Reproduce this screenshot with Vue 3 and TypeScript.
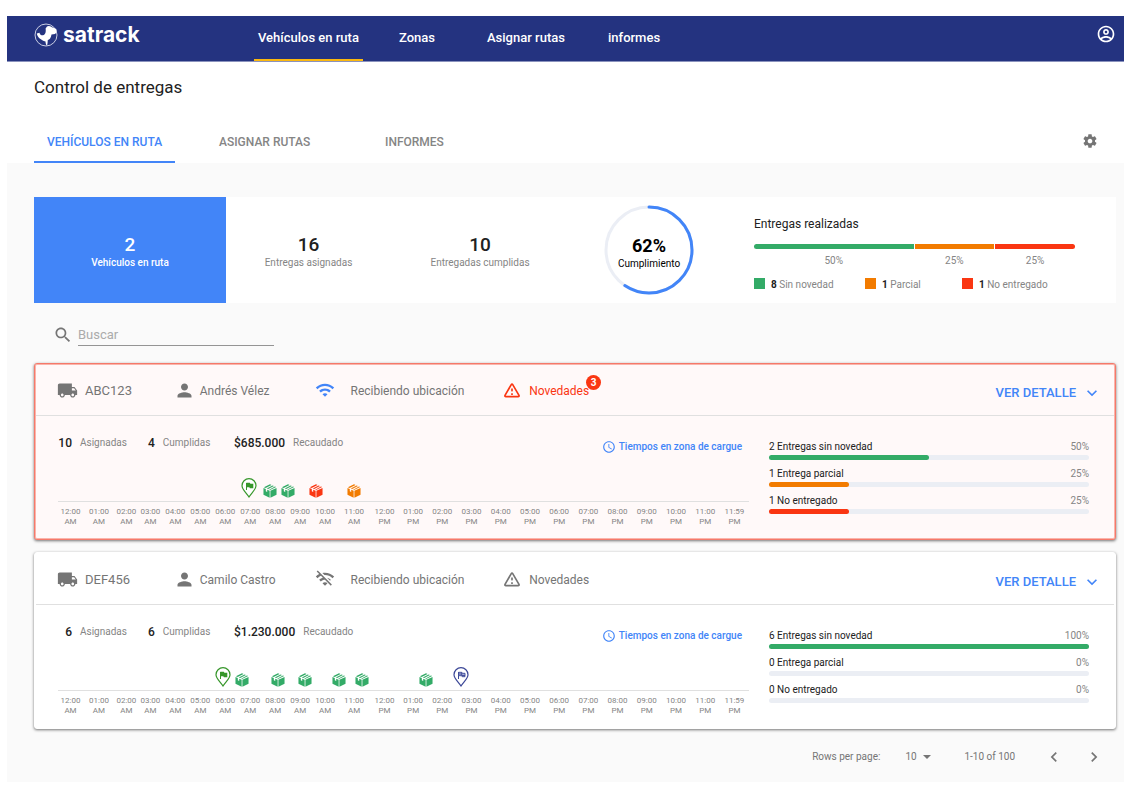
<script setup lang="ts">
import { ref } from 'vue'

type EventKind = 'start' | 'end' | 'ok' | 'partial' | 'failed'

interface TimelineEvent {
  kind: EventKind
  at: number
}

interface Progress {
  label: string
  percent: number
  tone: 'ok' | 'partial' | 'failed'
}

interface Vehicle {
  plate: string
  driver: string
  online: boolean
  alerts: number
  assigned: number
  completed: number
  collected: string
  events: TimelineEvent[]
  progress: Progress[]
}

const sections = ['Vehículos en ruta', 'Zonas', 'Asignar rutas', 'informes']
const tabs = ['VEHÍCULOS EN RUTA', 'ASIGNAR RUTAS', 'INFORMES']
const activeTab = ref(0)
const search = ref('')
const pageSize = ref('10')

const totals = [
  { value: 2, label: 'Vehículos en ruta' },
  { value: 16, label: 'Entregas asignadas' },
  { value: 10, label: 'Entregadas cumplidas' },
]

const results = [
  { count: 8, label: 'Sin novedad', percent: 50, tone: 'ok' },
  { count: 1, label: 'Parcial', percent: 25, tone: 'partial' },
  { count: 1, label: 'No entregado', percent: 25, tone: 'failed' },
]

const hours = [
  '12:00 AM', '01:00 AM', '02:00 AM', '03:00 AM', '04:00 AM', '05:00 AM', '06:00 AM',
  '07:00 AM', '08:00 AM', '09:00 AM', '10:00 AM', '11:00 AM', '12:00 PM', '01:00 PM',
  '02:00 PM', '03:00 PM', '04:00 PM', '05:00 PM', '06:00 PM', '07:00 PM', '08:00 PM',
  '09:00 PM', '10:00 PM', '11:00 PM', '11:59 PM',
].map((h) => h.split(' '))

const vehicles: Vehicle[] = [
  {
    plate: 'ABC123',
    driver: 'Andrés Vélez',
    online: true,
    alerts: 3,
    assigned: 10,
    completed: 4,
    collected: '$685.000',
    events: [
      { kind: 'start', at: 27.6 },
      { kind: 'ok', at: 30.7 },
      { kind: 'ok', at: 33.3 },
      { kind: 'failed', at: 37.4 },
      { kind: 'partial', at: 42.8 },
    ],
    progress: [
      { label: '2 Entregas sin novedad', percent: 50, tone: 'ok' },
      { label: '1 Entrega parcial', percent: 25, tone: 'partial' },
      { label: '1 No entregado', percent: 25, tone: 'failed' },
    ],
  },
  {
    plate: 'DEF456',
    driver: 'Camilo Castro',
    online: false,
    alerts: 0,
    assigned: 6,
    completed: 6,
    collected: '$1.230.000',
    events: [
      { kind: 'start', at: 23.9 },
      { kind: 'ok', at: 26.6 },
      { kind: 'ok', at: 31.8 },
      { kind: 'ok', at: 35.8 },
      { kind: 'ok', at: 40.7 },
      { kind: 'ok', at: 44 },
      { kind: 'ok', at: 53.3 },
      { kind: 'end', at: 58.3 },
    ],
    progress: [
      { label: '6 Entregas sin novedad', percent: 100, tone: 'ok' },
      { label: '0 Entrega parcial', percent: 0, tone: 'partial' },
      { label: '0 No entregado', percent: 0, tone: 'failed' },
    ],
  },
]
</script>

<template>
  <div class="page">
    <header class="topbar">
      <a class="brand" href="#">
        <svg width="24" height="24" viewBox="0 0 24 24" aria-hidden="true">
          <circle cx="12" cy="12" r="11" fill="none" stroke="#c9cde3" stroke-width="1" />
          <path fill="#fff" d="M13 3.500C14 2.500 16 2.800 18 4.200L22.300 6C22.800 8 22.300 10.500 21 11L17.500 11.500C17 15 15.500 16.500 13.800 17C13.600 19 13.600 21 13 22.600C12 22 11.600 20 11.500 18.500C7 17 3.500 14.500 2.800 10.500L5.500 9.800C6 11.800 7.500 12.600 9 12.300C11.800 11.500 12 8.500 11.600 5.500Z" />
        </svg>
        <span>satrack</span>
      </a>
      <nav class="sections">
        <a v-for="(s, i) in sections" :key="s" href="#" :class="{ active: i === 0 }">{{ s }}</a>
      </nav>
      <button class="icon-button account" type="button" aria-label="Cuenta">
        <svg width="20" height="20" viewBox="0 0 24 24" fill="currentColor">
          <path d="M12 2C6.480 2 2 6.480 2 12s4.480 10 10 10 10-4.480 10-10S17.520 2 12 2zM7.070 18.280c.43-.9 3.050-1.780 4.930-1.780s4.510.88 4.930 1.780C15.570 19.360 13.860 20 12 20s-3.570-.64-4.930-1.720zm11.290-1.450c-1.430-1.740-4.900-2.330-6.360-2.330s-4.930.59-6.360 2.330C4.620 15.490 4 13.820 4 12c0-4.410 3.590-8 8-8s8 3.590 8 8c0 1.820-.62 3.490-1.640 4.830zM12 6c-1.940 0-3.500 1.560-3.500 3.500S10.060 13 12 13s3.500-1.560 3.500-3.500S13.940 6 12 6zm0 5c-.83 0-1.500-.67-1.500-1.500S11.170 8 12 8s1.500.67 1.500 1.500S12.830 11 12 11z" />
        </svg>
      </button>
    </header>

    <h1>Control de entregas</h1>

    <div class="tabbar">
      <div class="tabs" role="tablist">
        <button
          v-for="(t, i) in tabs"
          :key="t"
          type="button"
          role="tab"
          :aria-selected="activeTab === i"
          :class="{ active: activeTab === i }"
          @click="activeTab = i"
        >{{ t }}</button>
      </div>
      <button class="icon-button gear" type="button" aria-label="Configuración">
        <svg width="16" height="16" viewBox="0 0 24 24" fill="currentColor">
          <path d="M19.430 12.980c.04-.32.07-.64.07-.98s-.03-.66-.07-.98l2.110-1.650c.19-.15.24-.42.12-.64l-2-3.460c-.12-.22-.39-.3-.61-.22l-2.490 1c-.52-.4-1.080-.73-1.690-.98l-.38-2.650C14.460 2.180 14.250 2 14 2h-4c-.25 0-.46.18-.49.42l-.38 2.650c-.61.25-1.170.59-1.690.98l-2.490-1c-.23-.09-.49 0-.61.22l-2 3.460c-.13.22-.07.49.12.64l2.110 1.650c-.04.32-.07.65-.07.98s.03.66.07.98l-2.110 1.650c-.19.15-.24.42-.12.64l2 3.460c.12.22.39.3.61.22l2.490-1c.52.4 1.080.73 1.690.98l.38 2.650c.03.24.24.42.49.42h4c.25 0 .46-.18.49-.42l.38-2.650c.61-.25 1.170-.59 1.690-.98l2.490 1c.23.09.49 0 .61-.22l2-3.460c.12-.22.07-.49-.12-.64l-2.110-1.650zM12 15.500c-1.930 0-3.500-1.570-3.500-3.500s1.570-3.500 3.500-3.500 3.500 1.570 3.500 3.500-1.570 3.500-3.500 3.500z" />
        </svg>
      </button>
    </div>

    <main class="panel">
      <section class="summary">
        <div v-for="(t, i) in totals" :key="t.label" class="total" :class="{ selected: i === 0 }">
          <strong>{{ t.value }}</strong>
          <span>{{ t.label }}</span>
        </div>
        <div class="compliance">
          <svg class="ring" width="90" height="90" viewBox="0 0 90 90" fill="none" stroke-width="3" aria-hidden="true">
            <circle cx="45" cy="45" r="43" stroke="#ebeef5" />
            <circle cx="45" cy="45" r="43" stroke="#4285f8" stroke-linecap="round" pathLength="100" stroke-dasharray="59.500 100" transform="rotate(-90 45 45)" />
          </svg>
          <div class="ring-text">
            <strong>62%</strong>
            <span>Cumplimiento</span>
          </div>
        </div>
        <div class="results">
          <h2>Entregas realizadas</h2>
          <div class="split">
            <div v-for="r in results" :key="r.label" class="part" :style="{ flexGrow: r.percent }">
              <div class="part-bar" :class="r.tone"></div>
              <span>{{ r.percent }}%</span>
            </div>
          </div>
          <ul class="legend">
            <li v-for="r in results" :key="r.label">
              <i :class="r.tone"></i>
              <span><b>{{ r.count }}</b> {{ r.label }}</span>
            </li>
          </ul>
        </div>
      </section>

      <div class="search">
        <label for="search" aria-label="Buscar">
          <svg width="20" height="20" viewBox="0 0 24 24" fill="currentColor">
            <path d="M15.500 14h-.79l-.28-.27C15.410 12.590 16 11.110 16 9.500 16 5.910 13.090 3 9.500 3S3 5.910 3 9.500 5.910 16 9.500 16c1.610 0 3.090-.59 4.230-1.570l.27.28v.79l5 4.990L20.490 19l-4.990-5zm-6 0C7.010 14 5 11.990 5 9.500S7.010 5 9.500 5 14 7.010 14 9.500 11.990 14 9.500 14z" />
          </svg>
        </label>
        <input id="search" v-model="search" type="text" placeholder="Buscar" />
      </div>

      <div class="cards">
        <article v-for="v in vehicles" :key="v.plate" class="card" :class="{ alert: v.alerts > 0 }">
          <header class="card-head">
            <div class="fact plate">
              <svg width="21" height="21" viewBox="0 0 24 24" fill="currentColor" aria-hidden="true">
                <path d="M20 8h-3V4H3c-1.100 0-2 .9-2 2v11h2c0 1.660 1.340 3 3 3s3-1.340 3-3h6c0 1.660 1.340 3 3 3s3-1.340 3-3h2v-5l-3-4zM6 18.500c-.83 0-1.500-.67-1.500-1.500s.67-1.500 1.500-1.500 1.500.67 1.500 1.500-.67 1.500-1.500 1.500zm13.500-9l1.960 2.500H17V9.500h2.500zm-1.500 9c-.83 0-1.500-.67-1.500-1.500s.67-1.500 1.500-1.500 1.500.67 1.500 1.500-.67 1.500-1.500 1.500z" />
              </svg>
              <span>{{ v.plate }}</span>
            </div>
            <div class="fact driver">
              <svg width="21" height="21" viewBox="0 0 24 24" fill="currentColor" aria-hidden="true">
                <path d="M12 12c2.210 0 4-1.790 4-4s-1.790-4-4-4-4 1.790-4 4 1.790 4 4 4zm0 2c-2.670 0-8 1.340-8 4v2h16v-2c0-2.660-5.330-4-8-4z" />
              </svg>
              <span>{{ v.driver }}</span>
            </div>
            <div class="fact signal">
              <svg width="20" height="20" viewBox="0 0 24 24" fill="currentColor" :class="{ online: v.online }" aria-hidden="true">
                <path v-if="v.online" d="M1 9l2 2c4.970-4.970 13.030-4.970 18 0l2-2C16.930 2.930 7.080 2.930 1 9zm8 8l3 3 3-3c-1.650-1.660-4.340-1.660-6 0zm-4-4l2 2c2.760-2.760 7.240-2.760 10 0l2-2C15.140 9.140 8.870 9.140 5 13z" />
                <path v-else d="M22.990 9C19.150 5.160 13.800 3.760 8.840 4.780l2.520 2.520c3.470-.17 6.990 1.050 9.630 3.700l2-2zm-4 4c-1.290-1.290-2.840-2.130-4.490-2.560l3.530 3.530.96-.97zM2 3.050L5.070 6.100C3.600 6.820 2.220 7.780 1 9l1.990 2c1.240-1.240 2.670-2.160 4.200-2.770l2.240 2.240C7.810 10.890 6.270 11.730 5 13v.01L6.990 15c1.360-1.360 3.140-2.040 4.920-2.060L18.980 20l1.270-1.260L3.290 1.790 2 3.050zM9 17l3 3 3-3c-1.650-1.660-4.340-1.660-6 0z" />
              </svg>
              <span>Recibiendo ubicación</span>
            </div>
            <div class="fact news">
              <svg width="20" height="20" viewBox="0 0 24 24" fill="currentColor" aria-hidden="true">
                <path d="M12 5.990L19.530 19H4.470L12 5.990M2.740 18c-.77 1.330.19 3 1.730 3h15.060c1.540 0 2.500-1.670 1.730-3L13.730 4.990c-.77-1.330-2.690-1.330-3.460 0L2.740 18zM11 11v2c0 .55.45 1 1 1s1-.45 1-1v-2c0-.55-.45-1-1-1s-1 .45-1 1zm0 5h2v2h-2z" />
              </svg>
              <span class="news-label">Novedades<b v-if="v.alerts" class="badge">{{ v.alerts }}</b></span>
            </div>
            <button class="detail" type="button">
              VER DETALLE
              <svg width="20" height="20" viewBox="0 0 24 24" fill="currentColor" aria-hidden="true">
                <path d="M16.590 8.590L12 13.170 7.410 8.590 6 10l6 6 6-6z" />
              </svg>
            </button>
          </header>

          <div class="card-body">
            <div class="route">
              <div class="route-head">
                <dl class="stats">
                  <div><dd>{{ v.assigned }}</dd><dt>Asignadas</dt></div>
                  <div><dd>{{ v.completed }}</dd><dt>Cumplidas</dt></div>
                  <div><dd>{{ v.collected }}</dd><dt>Recaudado</dt></div>
                </dl>
                <a class="times" href="#">
                  <svg width="14" height="14" viewBox="0 0 24 24" fill="currentColor" aria-hidden="true">
                    <path d="M11.990 2C6.470 2 2 6.480 2 12s4.470 10 9.990 10C17.520 22 22 17.520 22 12S17.520 2 11.990 2zM12 20c-4.420 0-8-3.580-8-8s3.580-8 8-8 8 3.580 8 8-3.580 8-8 8zm.5-13H11v6l5.250 3.150.75-1.230-4.500-2.670z" />
                  </svg>
                  Tiempos en zona de cargue
                </a>
              </div>
              <div class="track">
                <span
                  v-for="(e, i) in v.events"
                  :key="i"
                  class="event"
                  :class="e.kind"
                  :style="{ left: e.at + '%' }"
                >
                  <svg v-if="e.kind === 'start' || e.kind === 'end'" width="16" height="20" viewBox="0 0 16 20">
                    <path d="M8 19C5.500 15 1 11.500 1 7.700a7 7 0 0 1 14 0C15 11.500 10.500 15 8 19z" fill="#fff" stroke="currentColor" stroke-width="1.200" />
                    <path d="M5.500 12V5" stroke="currentColor" stroke-width="1" />
                    <path v-if="e.kind === 'start'" d="M5.300 4.800h3.500l.6 1h2.900v4.400H8.900l-.6-1H5.300z" fill="currentColor" />
                    <path v-else d="M5.500 5.300h3.200l.6 1h2.700v3.400H9.200l-.6-1H5.500zM8.700 5.300v3.400M5.500 7h3.200M9 8.500h3" fill="#aab0d8" stroke="currentColor" stroke-width=".9" />
                  </svg>
                  <svg v-else width="14" height="14" viewBox="0 0 24 24" fill="currentColor">
                    <path d="M12 .3l2.700 1.300L4.600 6.700 1.500 5.400zM16.500 2.400l2.300 1.100L8.900 8.500 6.500 7.500zM20.500 4.300l2 1L12 10.400l-1.400-.7z" />
                    <path d="M.8 6.700L4.800 8.600v3.800l2.400 1.100V9.700l4.200 2v12L.8 18.400zM23.200 6.700v11.700l-10.500 5.300v-12z" />
                  </svg>
                </span>
              </div>
              <ol class="hours">
                <li v-for="h in hours" :key="h.join()">{{ h[0] }}<br />{{ h[1] }}</li>
              </ol>
            </div>

            <div class="progress">
              <div v-for="p in v.progress" :key="p.label">
                <div class="progress-text"><span>{{ p.label }}</span><span class="muted">{{ p.percent }}%</span></div>
                <div class="meter"><div :class="p.tone" :style="{ width: p.percent + '%' }"></div></div>
              </div>
            </div>
          </div>
        </article>
      </div>

      <footer class="pager">
        <label for="page-size">Rows per page:</label>
        <div class="select">
          <select id="page-size" v-model="pageSize">
            <option>10</option>
            <option>25</option>
            <option>50</option>
          </select>
          <svg width="8" height="4" viewBox="0 0 8 4" aria-hidden="true"><path d="M0 0h8L4 4z" fill="currentColor" /></svg>
        </div>
        <span class="range">1-10 of 100</span>
        <button class="icon-button" type="button" aria-label="Anterior">
          <svg width="20" height="20" viewBox="0 0 24 24" fill="currentColor"><path d="M15.410 7.410L14 6l-6 6 6 6 1.410-1.410L10.830 12z" /></svg>
        </button>
        <button class="icon-button" type="button" aria-label="Siguiente">
          <svg width="20" height="20" viewBox="0 0 24 24" fill="currentColor"><path d="M10 6L8.590 7.410 13.170 12l-4.580 4.590L10 18l6-6z" /></svg>
        </button>
      </footer>
    </main>
  </div>
</template>

<style>
body {
  background: #fff;
}
</style>

<style scoped>
.page {
  margin: 16px 22px 7px 7px;
  font: 10px/14px Roboto, sans-serif;
  color: #212121;
}
.page * {
  box-sizing: border-box;
}
button,
input,
select {
  font: inherit;
  color: inherit;
  background: none;
  border: 0;
  padding: 0;
  margin: 0;
}
button {
  cursor: pointer;
}
a {
  color: inherit;
  text-decoration: none;
}
svg {
  display: block;
  flex: none;
}
h1,
h2,
ul,
ol,
dl,
dd,
dt {
  margin: 0;
  padding: 0;
  list-style: none;
  font-weight: 400;
}
.icon-button {
  display: block;
}

.topbar {
  display: grid;
  grid-template-columns: 220px 1fr auto;
  height: 46px;
  padding: 0 8px 0 27px;
  background: #243380;
  border-bottom: 1px solid #8a92bd;
  color: #fff;
}
.brand {
  display: flex;
  align-items: center;
  gap: 5px;
  padding-bottom: 8px;
  font: 700 21px/24px Inter, sans-serif;
}
.sections {
  display: grid;
  grid-template-columns: 141px 88px 121px auto;
  justify-content: start;
  justify-items: start;
}
.sections a {
  padding: 0 4px;
  font-size: 13px;
  font-weight: 500;
  line-height: 43px;
  border-bottom: 2px solid transparent;
}
.sections .active {
  border-bottom-color: #fbb80f;
}
.account {
  padding-bottom: 9px;
}

h1 {
  margin: 13px 27px 24px;
  font-size: 17px;
  line-height: 24px;
}
.tabbar {
  display: flex;
  justify-content: space-between;
  align-items: center;
  padding: 0 26px 0 27px;
}
.tabs {
  display: grid;
  grid-template-columns: 172px 166px auto;
  justify-items: start;
}
.tabs button {
  padding: 0 13px;
  font-size: 12px;
  line-height: 38px;
  font-weight: 500;
  color: #858585;
  border-bottom: 2px solid transparent;
}
.tabs .active {
  color: #4285f8;
  border-bottom-color: #4285f8;
}
.gear {
  padding-bottom: 4px;
  color: #757575;
}

.panel {
  padding: 34px 8px 15px 27px;
  background: #fafafa;
}
.summary {
  display: grid;
  grid-template-columns: 192fr 165fr 178fr 160fr 387fr;
  min-height: 106px;
  background: #fff;
}
.total {
  display: flex;
  flex-direction: column;
  align-items: center;
  justify-content: center;
  padding-top: 4px;
  color: #858585;
}
.total strong {
  font-size: 19px;
  line-height: 22px;
  font-weight: 500;
  color: #212121;
}
.total.selected,
.total.selected strong {
  color: #fff;
}
.total.selected {
  background: #4285f8;
  font-weight: 500;
}
.compliance {
  display: grid;
  place-items: center;
  color: #000;
}
.compliance > * {
  grid-area: 1 / 1;
}
.ring-text {
  display: flex;
  flex-direction: column;
  align-items: center;
  padding-top: 6px;
}
.ring-text strong {
  font-size: 18px;
  line-height: 22px;
  font-weight: 700;
}
.results {
  padding: 19px 41px 11px 25px;
}
h2 {
  font-size: 12px;
  line-height: 16px;
}
.split {
  display: flex;
  gap: 1px;
  margin-top: 12px;
}
.part {
  flex-basis: 0;
  text-align: center;
  color: #858585;
}
.part-bar {
  height: 5px;
  margin-bottom: 5px;
}
.part:first-child .part-bar {
  border-radius: 3px 0 0 3px;
}
.part:last-child .part-bar {
  border-radius: 0 3px 3px 0;
}
.ok {
  background: #33ab67;
}
.partial {
  background: #f27b00;
}
.failed {
  background: #fa3612;
}
.legend {
  display: grid;
  grid-template-columns: 111fr 97fr 113fr;
  margin-top: 10px;
  color: #858585;
}
.legend li {
  display: flex;
  gap: 6px;
  white-space: nowrap;
}
.legend i {
  width: 11px;
  height: 11px;
}
.legend b {
  font-weight: 700;
  color: #212121;
}

.search {
  display: flex;
  align-items: center;
  gap: 5px;
  margin: 22px 0 17px;
  padding-left: 19px;
  color: #757575;
}
.search label {
  padding-bottom: 1px;
}
.search input {
  width: 196px;
  height: 21px;
  padding-bottom: 2px;
  font-size: 13px;
  border-bottom: 1px solid #949494;
  border-radius: 0;
  outline: 0;
}
.search input::placeholder {
  color: #ababab;
  opacity: 1;
}

.cards {
  display: grid;
  gap: 12px;
}
.card {
  padding: 1px;
  background: #fff;
  border: 1px solid #fff;
  border-radius: 3px;
  box-shadow: 0 1px 3px rgba(0, 0, 0, 0.55);
}
.card.alert {
  background: #fff9f9;
  border-color: #f5796a;
  box-shadow: 0 1px 3px rgba(0, 0, 0, 0.55), inset 0 0 0 1px #fab4ab;
}
.card-head {
  display: grid;
  grid-template-columns: 117fr 141fr 188fr 200fr 401fr;
  align-items: center;
  min-height: 51px;
  padding: 0 12px 0 21px;
  border-bottom: 1px solid #e0e0e0;
  color: #757575;
  font-size: 12px;
}
.fact {
  display: flex;
  align-items: center;
  white-space: nowrap;
}
.fact span {
  padding-top: 2px;
}
.plate {
  gap: 7px;
  font-size: 13px;
}
.driver {
  gap: 5px;
}
.signal {
  gap: 16px;
}
.online {
  color: #4285f8;
}
.news {
  gap: 7px;
}
.news-label {
  position: relative;
}
.alert .news {
  color: #fa3612;
}
.badge {
  position: absolute;
  left: 100%;
  bottom: 8px;
  width: 15px;
  height: 15px;
  margin-left: -3px;
  border-radius: 50%;
  background: #fa3612;
  color: #fff;
  font-size: 10px;
  line-height: 15px;
  text-align: center;
}
.detail {
  display: flex;
  align-items: center;
  gap: 6px;
  justify-self: end;
  padding-top: 5px;
  font-size: 13px;
  font-weight: 500;
  color: #4285f8;
}

.card-body {
  display: grid;
  grid-template-columns: 691fr 320fr;
  gap: 20px;
  padding: 19px 25px 11px 22px;
}
.route-head {
  display: flex;
  justify-content: space-between;
  min-height: 20px;
  padding-right: 7px;
}
.stats {
  display: grid;
  grid-template-columns: 90px 86px auto;
  line-height: 16px;
}
.stats div {
  display: flex;
  gap: 8px;
}
.stats div:first-child dd {
  min-width: 14px;
  text-align: right;
}
.stats dd {
  font-size: 12px;
  font-weight: 500;
}
.stats dt {
  color: #858585;
}
.times {
  display: flex;
  align-items: center;
  align-self: flex-end;
  gap: 3px;
  line-height: 16px;
  font-weight: 500;
  color: #4285f8;
}
.track {
  position: relative;
  height: 47px;
  border-bottom: 1px solid #e0e0e0;
}
.event {
  position: absolute;
  bottom: 3px;
  background: none;
  transform: translateX(-50%);
}
.event.ok {
  color: #33ab67;
}
.event.partial {
  color: #f27b00;
}
.event.failed {
  color: #fa3612;
}
.event.start {
  color: #36962a;
}
.event.end {
  color: #3b4797;
}
.hours {
  display: grid;
  grid-template-columns: 100fr 128fr 92fr repeat(8, 100fr) 132fr 112fr repeat(12, 117fr);
  padding-top: 5px;
  font-size: 8px;
  line-height: 10px;
  text-align: center;
  color: #858585;
}
.hours li {
  min-width: 0;
}
.progress {
  display: grid;
  align-content: start;
  gap: 6px;
  padding-top: 4px;
}
.progress-text {
  display: flex;
  justify-content: space-between;
  line-height: 16px;
}
.muted {
  color: #858585;
}
.meter {
  height: 5px;
  border-radius: 3px;
  background: #ebeef4;
}
.meter div {
  height: 100%;
  border-radius: 3px;
}

.pager {
  display: flex;
  align-items: center;
  justify-content: flex-end;
  margin-top: 18px;
  padding-right: 12px;
  color: #757575;
}
.select {
  display: flex;
  align-items: center;
  margin: 0 33px 0 25px;
}
.select select {
  width: 26px;
  margin-right: -8px;
  appearance: none;
}
.select svg {
  pointer-events: none;
}
.range {
  margin-right: 29px;
}
.pager .icon-button + .icon-button {
  margin-left: 20px;
}
</style>
